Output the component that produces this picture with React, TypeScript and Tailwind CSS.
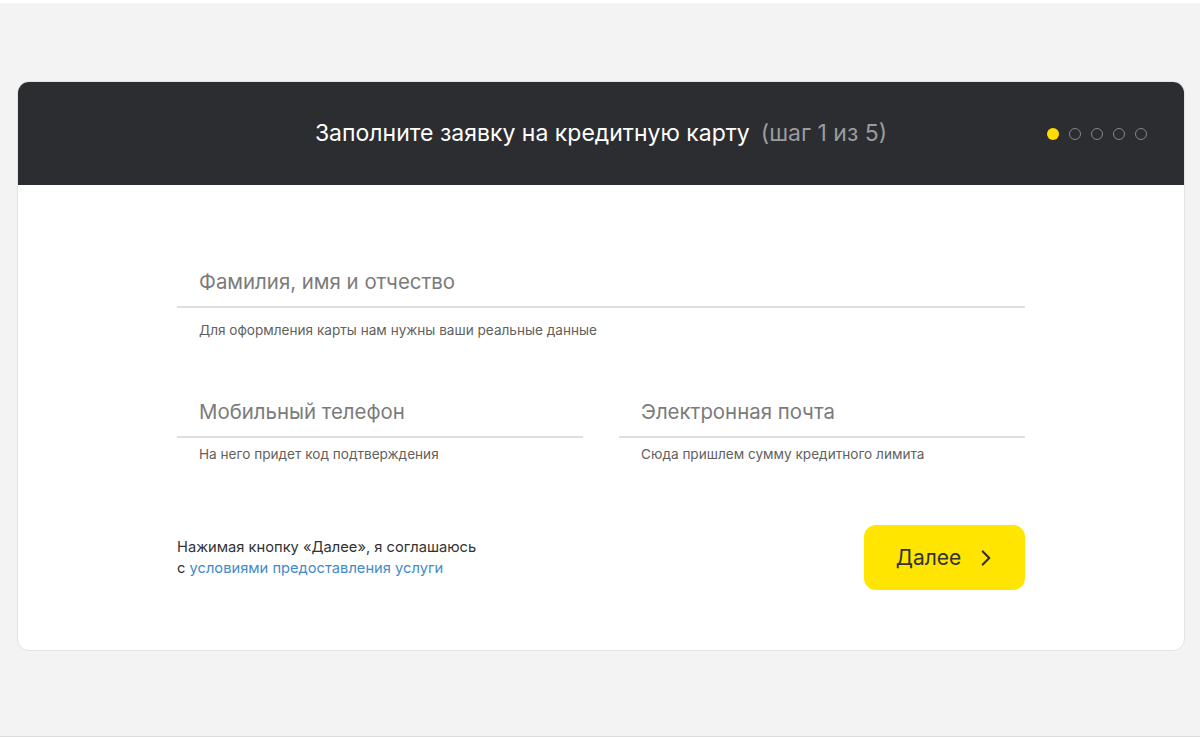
import React from 'react';
import { ChevronRight } from 'lucide-react';

const Field = ({ label, hint, hintGap }: { label: string; hint: string; hintGap: string }) => (
  <div className="flex-1">
    <div className="pl-[22px] h-[28px] text-[20.4px] leading-[28px] text-[#7b7b7b]">{label}</div>
    <div className="mt-[10px] border-b-2 border-[#dedede]" />
    <div className={`${hintGap} pl-[22px] text-[13.6px] leading-[16px] text-[#5f5f5f]`}>{hint}</div>
  </div>
);

const Steps = () => (
  <div className="flex items-center gap-[10px]">
    <span className="w-[12px] h-[12px] rounded-full bg-[#ffdd00]" />
    {[0, 1, 2, 3].map((i) => (
      <span key={i} className="w-[12px] h-[12px] rounded-full border-[1.5px] border-[#85868a]" />
    ))}
  </div>
);

export default function App() {
  return (
    <div
      className="h-[737px] flex flex-col bg-[#f3f3f3] border-t-[3px] border-white"
      style={{ fontFamily: 'Inter, "Noto Sans", sans-serif' }}
    >
      <div className="mt-[78px] ml-[17px] mr-[15px] bg-white rounded-[12px] border border-[#e3e3e3] overflow-hidden">
        <div className="relative h-[103px] bg-[#2c2d31] flex items-center justify-center">
          <h1 className="text-[23px] text-white">
            Заполните заявку на кредитную карту
            <span className="ml-[11px] text-[#9a9b9e]">(шаг 1 из 5)</span>
          </h1>
          <div className="absolute right-[37px] top-1/2 -translate-y-1/2">
            <Steps />
          </div>
        </div>

        <div className="w-[848px] mx-auto pt-[83px] pb-[60px]">
          <Field label="Фамилия, имя и отчество" hint="Для оформления карты нам нужны ваши реальные данные" hintGap="mt-[14px]" />

          <div className="mt-[60px] flex gap-[36px]">
            <Field label="Мобильный телефон" hint="На него придет код подтверждения" hintGap="mt-[8px]" />
            <Field label="Электронная почта" hint="Сюда пришлем сумму кредитного лимита" hintGap="mt-[8px]" />
          </div>

          <div className="mt-[63px] flex items-center justify-between">
            <p className="text-[14.7px] leading-[21px] text-[#333333]">
              Нажимая кнопку «Далее», я соглашаюсь
              <br />
              с <a className="text-[#428bca]">условиями предоставления услуги</a>
            </p>
            <button className="w-[161px] h-[65px] rounded-[12px] bg-[#ffe500] flex items-center justify-center gap-[12px] pl-[6px] text-[21px] text-[#333333]">
              Далее
              <ChevronRight size={26} strokeWidth={2} className="text-[#333333]" />
            </button>
          </div>
        </div>
      </div>
      <div className="flex-1" />
      <div className="h-px bg-[#dcdcdc]" />
    </div>
  );
}
